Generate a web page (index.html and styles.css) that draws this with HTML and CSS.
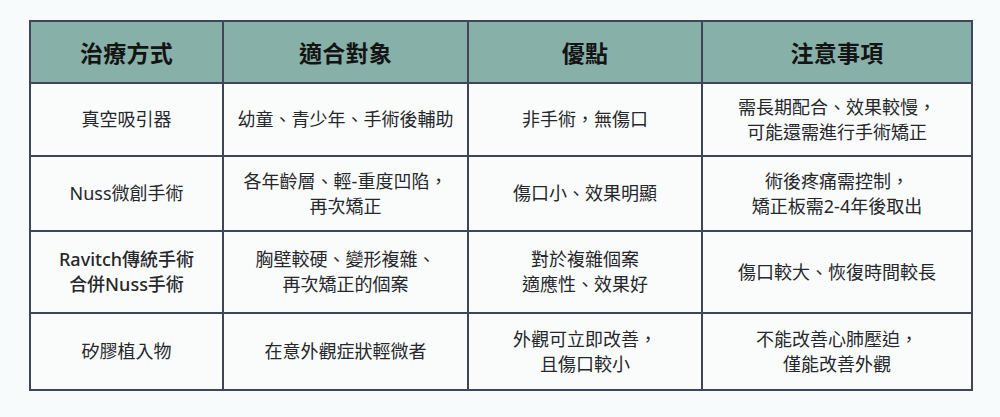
FILE: index.html
```html
<!DOCTYPE html>
<html lang="zh-Hant">
<head>
<meta charset="utf-8">
<title>治療方式比較</title>
<link rel="stylesheet" href="styles.css">
</head>
<body>
<table class="cmp">
  <colgroup>
    <col class="c1"><col class="c2"><col class="c3"><col class="c4">
  </colgroup>
  <thead>
    <tr class="rh">
      <th>治療方式</th>
      <th>適合對象</th>
      <th>優點</th>
      <th>注意事項</th>
    </tr>
  </thead>
  <tbody>
    <tr class="r1">
      <td>真空吸引器</td>
      <td>幼童、青少年、手術後輔助</td>
      <td>非手術，無傷口</td>
      <td>需長期配合、效果較慢，<br>可能還需進行手術矯正</td>
    </tr>
    <tr class="r2">
      <td>Nuss微創手術</td>
      <td>各年齡層、輕-重度凹陷，<br>再次矯正</td>
      <td>傷口小、效果明顯</td>
      <td>術後疼痛需控制，<br>矯正板需2-4年後取出</td>
    </tr>
    <tr class="r3">
      <td class="med">Ravitch傳統手術<br>合併Nuss手術</td>
      <td>胸壁較硬、變形複雜、<br>再次矯正的個案</td>
      <td>對於複雜個案<br>適應性、效果好</td>
      <td>傷口較大、恢復時間較長</td>
    </tr>
    <tr class="r4">
      <td>矽膠植入物</td>
      <td class="shift">在意外觀症狀輕微者</td>
      <td>外觀可立即改善，<br>且傷口較小</td>
      <td>不能改善心肺壓迫，<br>僅能改善外觀</td>
    </tr>
  </tbody>
</table>
</body>
</html>
```

FILE: styles.css
```css
html, body {
  margin: 0;
  padding: 0;
  background: #f8fbfb;
}
body {
  padding: 20px 0 0 29px;
  font-family: "Noto Sans", "Noto Sans CJK SC", sans-serif;
  color: #26272b;
}
.cmp {
  border-collapse: collapse;
  table-layout: fixed;
  width: 942px;
}
.c1 { width: 193px; }
.c2 { width: 245px; }
.c3 { width: 234px; }
.c4 { width: 270px; }
.cmp th, .cmp td {
  border: 2px solid #404657;
  text-align: center;
  vertical-align: middle;
  padding: 0 4px;
}
.cmp th {
  background: #87b0a8;
  color: #141414;
  font-size: 23px;
  font-weight: 700;
  letter-spacing: 0.3px;
}
.cmp td {
  background: #fafcfc;
  font-size: 18px;
  line-height: 25px;
  font-weight: 400;
}
.cmp td.med { font-weight: 500; }
.rh { height: 62px; }
.r1 { height: 73px; }
.r2 { height: 75px; }
.r3 { height: 82px; }
.r4 { height: 77px; }
.shift { padding-left: 16px; }
```
